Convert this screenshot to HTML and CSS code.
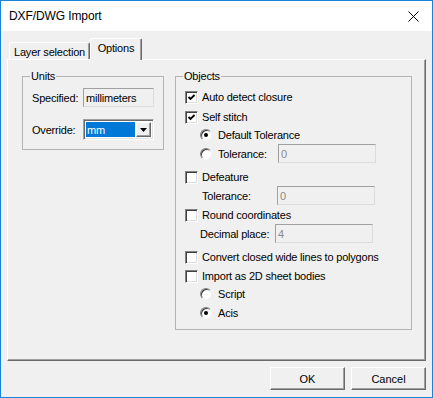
FILE: index.html
```html
<!DOCTYPE html>
<html lang="en">
<head>
    <meta charset="UTF-8">
    <title>DXF/DWG Import</title>
    <link rel="stylesheet" href="styles.css">
</head>
<body>
    <div class="window">
        <div class="titlebar">
            <span class="title">DXF/DWG Import</span>
            <svg class="close" width="11" height="11" viewBox="0 0 11 11">
                <path d="M0.5 0.5 L10.5 10.5 M10.5 0.5 L0.5 10.5" stroke="#000" stroke-width="1" fill="none"/>
            </svg>
        </div>

        <div class="content">
            <div class="tabs">
                <div class="tab tab-layer">Layer selection</div>
                <div class="tab tab-options active">Options</div>
            </div>

            <div class="panel">
                <!-- Units group -->
                <fieldset class="group units">
                    <legend>Units</legend>
                    <div class="row units-row">
                        <span class="units-label">Specified:</span>
                        <div class="field readonly">millimeters</div>
                    </div>
                    <div class="row units-row override-row">
                        <span class="units-label">Override:</span>
                        <div class="combo">
                            <span class="combo-value">mm</span>
                            <span class="combo-btn">
                                <svg width="7" height="4" viewBox="0 0 7 4"><path d="M0 0 H7 L3.5 4 Z" fill="#000"/></svg>
                            </span>
                        </div>
                    </div>
                </fieldset>

                <!-- Objects group -->
                <fieldset class="group objects">
                    <legend>Objects</legend>

                    <div class="row opt r-auto">
                        <span class="check checked"></span>Auto detect closure
                    </div>
                    <div class="row opt r-stitch">
                        <span class="check checked"></span>Self stitch
                    </div>
                    <div class="row opt sub r-default">
                        <span class="radio selected"></span>Default Tolerance
                    </div>
                    <div class="row opt sub r-tol">
                        <span class="radio"></span><span class="radio-label">Tolerance:</span>
                        <div class="field disabled">0</div>
                    </div>

                    <div class="row opt r-defeat">
                        <span class="check"></span>Defeature
                    </div>
                    <div class="row opt r-deftol">
                        <span class="field-label">Tolerance:</span>
                        <div class="field disabled">0</div>
                    </div>

                    <div class="row opt r-round">
                        <span class="check"></span>Round coordinates
                    </div>
                    <div class="row opt r-decimal">
                        <span class="field-label">Decimal place:</span>
                        <div class="field disabled">4</div>
                    </div>

                    <div class="row opt r-convert">
                        <span class="check"></span>Convert closed wide lines to polygons
                    </div>
                    <div class="row opt r-import">
                        <span class="check"></span>Import as 2D sheet bodies
                    </div>
                    <div class="row opt sub r-script">
                        <span class="radio"></span>Script
                    </div>
                    <div class="row opt sub r-acis">
                        <span class="radio selected"></span>Acis
                    </div>
                </fieldset>
            </div>

            <div class="buttons">
                <button class="btn btn-ok">OK</button>
                <button class="btn">Cancel</button>
            </div>
        </div>
    </div>
</body>
</html>
```

FILE: styles.css
```css
/* Page */
body {
    margin: 0;
    padding: 0;
    font-family: "Liberation Sans", Arial, sans-serif;
    font-size: 11px;
    letter-spacing: -0.2px;
    color: #000;
}

/* Window frame */
.window {
    width: 433px;
    height: 398px;
    box-sizing: border-box;
    border: 1px solid #1883d7;
    display: flex;
    flex-direction: column;
    background-color: #f0f0f0;
}

.titlebar {
    height: 30px;
    background-color: #fff;
    display: flex;
    align-items: center;
    justify-content: space-between;
    padding: 0 13px 0 8px;
}

.title {
    font-size: 12px;
    letter-spacing: -0.1px;
    color: #000;
}

.close {
    display: block;
}

.content {
    flex: 1;
    padding: 7px 6px 0 6px;
    display: flex;
    flex-direction: column;
}

/* Tabs */
.tabs {
    height: 21px;
    display: flex;
    align-items: flex-end;
    padding-left: 2px;
}

.tab {
    box-sizing: border-box;
    border-top: 1px solid #fff;
    border-left: 1px solid #fff;
    border-right: 1px solid #696969;
    box-shadow: inset -1px 0 0 #a0a0a0;
    border-radius: 2px 2px 0 0;
    display: flex;
    justify-content: center;
    align-items: center;
}

.tab-layer {
    width: 81px;
    height: 17px;
    padding-top: 1px;
}

.tab-options {
    width: 52px;
    height: 22px;
    margin-bottom: -1px;
    padding-bottom: 3px;
    position: relative;
    z-index: 1;
    background-color: #f0f0f0;
}

/* Tab panel */
.panel {
    height: 302px;
    box-sizing: border-box;
    border-top: 1px solid #fff;
    border-left: 1px solid #fff;
    border-right: 1px solid #696969;
    border-bottom: 1px solid #696969;
    box-shadow: inset -1px -1px 0 #a0a0a0;
    padding: 10px 0 0 14px;
    display: flex;
    align-items: flex-start;
    gap: 11px;
}

/* Group boxes */
.group {
    margin: 0;
    box-sizing: border-box;
    border: 1px solid #b4b4b4;
    padding: 5px 7px 0 7px;
    min-width: 0;
}

.group legend {
    padding: 0 1px;
    line-height: 13px;
}

.units {
    width: 142px;
    height: 80px;
}

.objects {
    width: 237px;
    height: 260px;
}

.row {
    display: flex;
    align-items: center;
    white-space: nowrap;
}

/* Units rows */
.units-row {
    height: 19px;
}

.override-row {
    height: 21px;
    margin-top: 12px;
}

.units-label {
    width: 51px;
    padding-left: 2px;
}

.field {
    box-sizing: border-box;
    height: 19px;
    border: 1px solid #a0a0a0;
    border-right-color: #dcdcdc;
    border-bottom-color: #dcdcdc;
    background-color: #f0f0f0;
    padding: 0 2px;
    display: flex;
    align-items: center;
}

.readonly {
    width: 71px;
}

.disabled {
    width: 98px;
    color: #8a8a8a;
}

.combo {
    box-sizing: border-box;
    width: 71px;
    height: 21px;
    border: 1px solid #a0a0a0;
    border-right-color: #fff;
    border-bottom-color: #fff;
    box-shadow: inset 1px 1px 0 #696969, inset -1px -1px 0 #e3e3e3;
    background-color: #fff;
    padding: 2px;
    display: flex;
}

.combo-value {
    flex: 1;
    background-color: #0078d7;
    color: #fff;
    padding-left: 1px;
    display: flex;
    align-items: center;
}

.combo-btn {
    width: 15px;
    margin-left: 1px;
    box-sizing: border-box;
    border: 1px solid;
    border-color: #fff #696969 #696969 #fff;
    box-shadow: inset -1px -1px 0 #a0a0a0;
    background-color: #f0f0f0;
    display: flex;
    align-items: center;
    justify-content: center;
}

/* Objects rows */
.opt {
    height: 18px;
    padding-left: 2px;
}

.opt.sub {
    padding-left: 17px;
}

.r-stitch { margin-top: 2px; }
.r-tol { height: 19px; }
.r-defeat { margin-top: 5px; }
.r-deftol { height: 19px; }
.r-round { margin-top: 1px; }
.r-decimal { height: 19px; }
.r-convert { margin-top: 5px; }
.r-import { margin-top: 1px; }
.r-acis { margin-top: 1px; }

.r-deftol .field-label {
    width: 75px;
    padding-left: 17px;
}

.r-decimal .field-label {
    width: 75px;
    padding-left: 15px;
}

.radio-label {
    width: 60px;
}

/* Check boxes */
.check {
    width: 13px;
    height: 13px;
    box-sizing: border-box;
    border: 1px solid;
    border-color: #808080 #fff #fff #808080;
    box-shadow: inset 1px 1px 0 #404040, inset -1px -1px 0 #dcdcdc;
    background-color: #fff;
    margin-right: 4px;
    flex-shrink: 0;
}

.check.checked {
    background-image: url("data:image/svg+xml,%3Csvg xmlns='http://www.w3.org/2000/svg' width='11' height='11' viewBox='0 0 11 11'%3E%3Cpath d='M2.5 5 L4.5 7 L8.5 3' stroke='%23000' stroke-width='1.8' fill='none'/%3E%3C/svg%3E");
    background-repeat: no-repeat;
    background-position: center;
}

/* Radio buttons */
.radio {
    width: 12px;
    height: 12px;
    box-sizing: border-box;
    border-radius: 50%;
    border: 1px solid;
    border-color: #808080 #f4f4f4 #f4f4f4 #808080;
    box-shadow: inset 1px 1px 0 #404040;
    background-color: #fff;
    margin-right: 6px;
    flex-shrink: 0;
    display: flex;
    align-items: center;
    justify-content: center;
}

.radio.selected::after {
    content: "";
    width: 4px;
    height: 4px;
    border-radius: 50%;
    background-color: #000;
}

/* Dialog buttons */
.buttons {
    display: flex;
    justify-content: flex-end;
    gap: 6px;
    margin-top: 6px;
}

.btn {
    width: 75px;
    height: 23px;
    box-sizing: border-box;
    font-family: "Liberation Sans", Arial, sans-serif;
    font-size: 11px;
    color: #000;
    background-color: #f0f0f0;
    border: 1px solid;
    border-color: #fff #696969 #696969 #fff;
    box-shadow: inset -1px -1px 0 #a0a0a0;
    padding: 0;
}
```
